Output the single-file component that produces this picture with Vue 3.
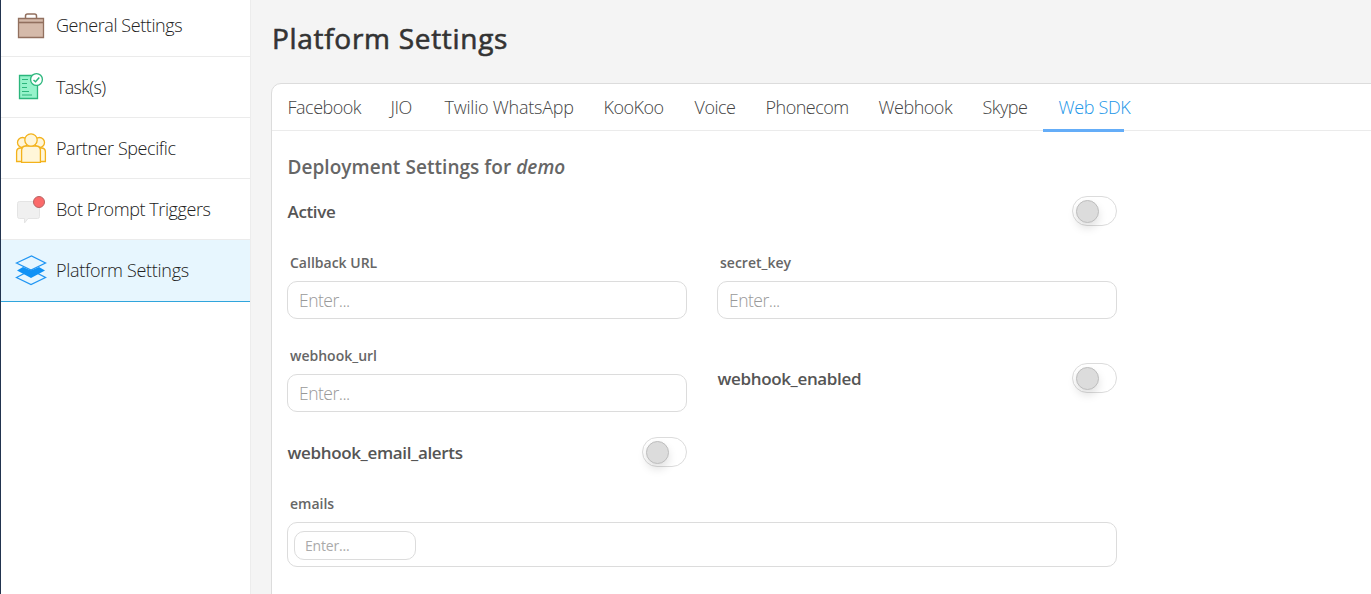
<script setup>
const menu = [
  { id: 'general', label: 'General Settings' },
  { id: 'tasks', label: 'Task(s)' },
  { id: 'partner', label: 'Partner Specific' },
  { id: 'prompts', label: 'Bot Prompt Triggers' },
  { id: 'platform', label: 'Platform Settings', active: true },
]
const tabs = ['Facebook', 'JIO', 'Twilio WhatsApp', 'KooKoo', 'Voice', 'Phonecom', 'Webhook', 'Skype', 'Web SDK']
</script>

<template>
  <div class="page">
    <nav class="sidebar">
      <a v-for="m in menu" :key="m.id" class="item" :class="[m.id, { active: m.active }]">
        <svg class="icon" width="32" height="32" viewBox="0 0 32 32" fill="none">
          <g v-if="m.id === 'general'" stroke="#92705f">
            <path d="M10.500 8V6Q10.500 4 12.500 4H19.500Q21.500 4 21.500 6V8" stroke-width="1.500" />
            <path d="M3.500 8.500H28.500V27.500H3.500Z" fill="#d5baaa" stroke-width="1.300" />
            <path d="M3.500 12.500H28.500" stroke-width="1.600" />
          </g>
          <g v-else-if="m.id === 'tasks'" stroke="#2bb67c">
            <path d="M4.500 4.500H22.500V27.500H4.500Z" fill="#96f3cb" stroke-width="1.300" />
            <path d="M7 8.500H13M7 12.500H12M7 16.500H12M7 20.500H14M7 24H17" stroke-width="1.200" />
            <circle cx="21.500" cy="8.500" r="5.900" fill="#fff" stroke-width="1.300" />
            <path d="M18.500 9L20.500 10.800L24.300 6.500" stroke-width="1.500" />
          </g>
          <g v-else-if="m.id === 'partner'" stroke="#f3b21b" fill="#fff6d9" stroke-width="1.300">
            <circle cx="7.500" cy="10.500" r="5" />
            <circle cx="24.500" cy="10.500" r="5" />
            <path d="M1.600 29.500V20Q1.600 16 5.600 16H10V29.500Z" />
            <path d="M30.400 29.500V20Q30.400 16 26.400 16H22V29.500Z" />
            <path d="M6.600 30.400V18.500Q6.600 14 11 14H21Q25.400 14 25.400 18.500V30.400Z" />
            <circle cx="16" cy="8" r="6.200" />
          </g>
          <g v-else-if="m.id === 'prompts'">
            <path d="M4.500 8.500H22.500Q24.500 8.500 24.500 10.500V23.500Q24.500 25.500 22.500 25.500H13L9.500 30V25.500H4.500Q2.500 25.500 2.500 23.500V10.500Q2.500 8.500 4.500 8.500Z" fill="#f0f0f0" stroke="#e4e4e4" />
            <circle cx="24" cy="9" r="5.500" fill="#fb6a6a" stroke="#b86464" />
          </g>
          <g v-else stroke="#2196f3" stroke-width="1.300">
            <path d="M1.500 22.500L16 15L30.500 22.500L16 29.500Z" />
            <path d="M2 15.500L8 12L16 15.500L24 12L30 15.500L16 23Z" fill="#1192f5" stroke="none" />
            <path d="M1.500 8L16.500 1L30.500 8L16 15Z" fill="#e7f6fe" />
          </g>
        </svg>
        <span class="label">{{ m.label }}</span>
      </a>
    </nav>

    <main class="main">
      <h1>Platform Settings</h1>
      <section class="card">
        <div class="tabs">
          <a v-for="t in tabs" :key="t" class="tab" :class="{ on: t === 'Web SDK' }"><span>{{ t }}</span></a>
        </div>
        <div class="form">
          <h2>Deployment Settings for <em>demo</em></h2>
          <div class="switch-row first"><span class="name">Active</span><i class="switch"></i></div>
          <div class="grid">
            <label class="field"><span class="cap">Callback URL</span><input placeholder="Enter..." /></label>
            <label class="field"><span class="cap">secret_key</span><input placeholder="Enter..." /></label>
            <label class="field"><span class="cap">webhook_url</span><input placeholder="Enter..." /></label>
            <div class="switch-row second"><span class="name">webhook_enabled</span><i class="switch"></i></div>
            <div class="switch-row third"><span class="name">webhook_email_alerts</span><i class="switch"></i></div>
          </div>
          <div class="field emails">
            <span class="cap">emails</span>
            <div class="chips"><input placeholder="Enter..." /></div>
          </div>
        </div>
      </section>
    </main>
  </div>
</template>

<style>
body { margin: 0; overflow: hidden; background: #f4f4f4; }
</style>

<style scoped>
* { box-sizing: border-box; }
.page {
  display: flex;
  height: 594px;
  overflow: hidden;
  background: #f4f4f4;
  font-family: "Open Sans", "Noto Sans", sans-serif;
}
.sidebar {
  width: 251px;
  flex: none;
  background: #fff;
  border-left: 1px solid #22344f;
  border-right: 1px solid #ececec;
}
.item {
  display: flex;
  align-items: center;
  height: 61px;
  padding-left: 14px;
  border-bottom: 1px solid #ebebeb;
  color: #222;
  font-size: 18px;
  font-weight: 300;
  letter-spacing: -0.42px;
  white-space: nowrap;
}
.item.general { height: 57px; padding-bottom: 5px; }
.item.general .label, .item.active .label { margin-top: -1px; }
.item.tasks { letter-spacing: -0.7px; }
.item.active { height: 62px; background: #e7f6fe; border-bottom-color: #30a5dc; letter-spacing: -0.3px; }
.icon { flex: none; margin-right: 9px; }
.main { flex: 1; min-width: 0; padding-left: 20px; }
h1 {
  margin: 0;
  height: 83px;
  padding: 19px 0 0 1px;
  line-height: 38px;
  font-size: 28px;
  font-weight: 400;
  letter-spacing: 0.7px;
  -webkit-text-stroke: 0.6px #333;
  color: #333;
  white-space: nowrap;
}
.card {
  height: 540px;
  margin-right: -20px;
  background: #fff;
  border: 1px solid #dcdcdc;
  border-radius: 10px;
}
.tabs {
  display: grid;
  grid-template-columns: 103px 54px 159px 91px 71px 113px 104px 76px 81px;
  height: 47px;
  border-bottom: 1px solid #ebebeb;
}
.tab {
  height: 48px;
  padding-left: 15.5px;
  line-height: 46px;
  font-size: 18px;
  font-weight: 300;
  letter-spacing: -0.5px;
  color: #444;
  white-space: nowrap;
}
.tab:nth-child(3) { letter-spacing: -0.24px; }
.tab.on { color: #2196e8; border-bottom: 3px solid #64adf8; letter-spacing: -0.35px; }
.form { width: 845px; padding: 19px 0 0 15px; color: #555; }
h2 { margin: 0; padding-left: 0.5px; line-height: 34px; font-size: 19px; font-weight: 600; letter-spacing: 0.05px; color: #666; white-space: nowrap; }
.switch-row { display: flex; align-items: center; justify-content: space-between; height: 30px; }
.first { margin-top: 12px; }
.name { padding: 1px 0 0 0.5px; font-size: 17px; font-weight: 600; letter-spacing: -0.35px; color: #555; line-height: 30px; white-space: nowrap; }
.switch {
  flex: none;
  width: 45px;
  height: 30px;
  padding: 3px;
  border: 1px solid #dcdcdc;
  border-radius: 15px;
  background: #fff;
}
.switch::before {
  content: "";
  display: block;
  width: 21px;
  height: 21px;
  border: 1px solid #bdbdbd;
  border-radius: 50%;
  background: #dcdcdc;
  box-shadow: 0 5px 10px rgba(0, 0, 0, 0.12);
}
.grid {
  display: grid;
  grid-template-columns: 400px 400px;
  grid-template-rows: 93px 93px 30px;
  column-gap: 30px;
  padding-top: 26px;
}
.field { display: block; }
.cap { display: block; height: 29px; padding-left: 3px; line-height: 22px; font-size: 14px; font-weight: 600; color: #666; white-space: nowrap; }
input {
  display: block;
  width: 100%;
  height: 38px;
  padding: 0 11px;
  border: 1px solid #dcdcdc;
  border-radius: 10px;
  background: #fff;
  font-family: inherit;
  font-size: 17.5px;
  font-weight: 300;
  letter-spacing: -0.5px;
  outline: none;
}
input::placeholder { color: #999; opacity: 1; }
.second { margin-top: 18px; }
.third { margin-top: -1px; }
.emails { margin-top: 25px; width: 830px; }
.chips { height: 45px; padding: 8px 6px; border: 1px solid #dcdcdc; border-radius: 10px; }
.chips input { width: 122px; height: 29px; padding: 0 10px; font-size: 14px; font-weight: 400; letter-spacing: -0.2px; }
.chips input::placeholder { color: #aaa; }
</style>
